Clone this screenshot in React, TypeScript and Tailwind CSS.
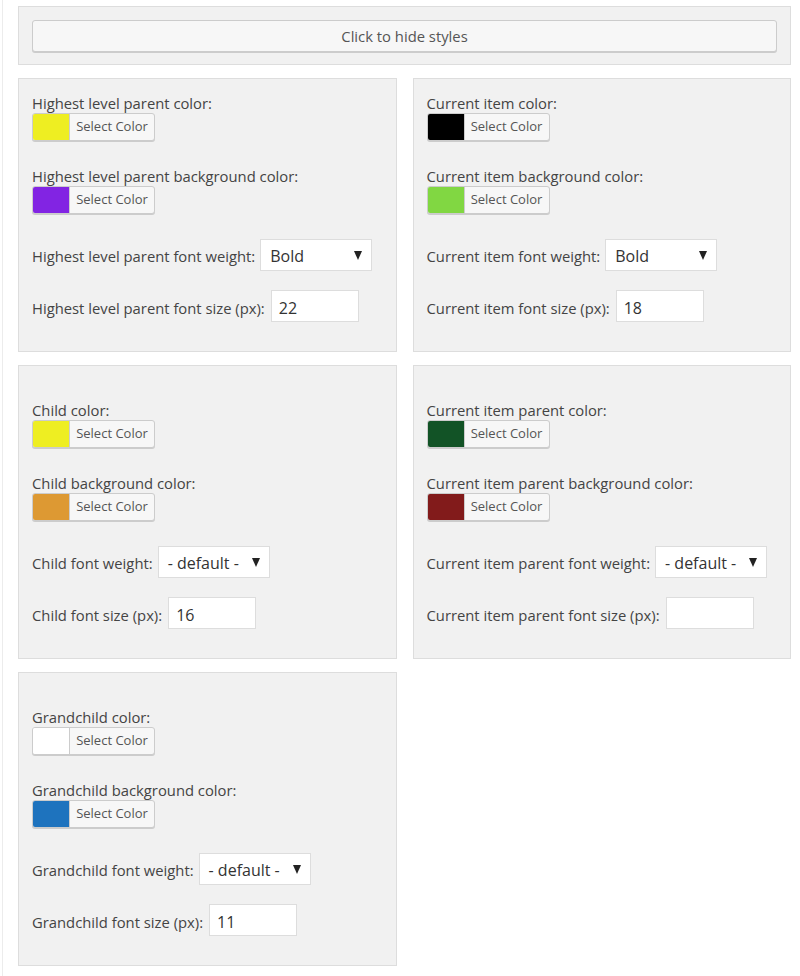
import React from 'react';

type Field = { label: string; color: string };
type Panel = {
  colors: Field[];
  weightLabel: string;
  weight: string;
  sizeLabel: string;
  size: string;
  spaced?: boolean;
};

const panels: Panel[] = [
  {
    colors: [
      { label: 'Highest level parent color:', color: '#eeee22' },
      { label: 'Highest level parent background color:', color: '#8224e3' },
    ],
    weightLabel: 'Highest level parent font weight:',
    weight: 'Bold',
    sizeLabel: 'Highest level parent font size (px):',
    size: '22',
  },
  {
    colors: [
      { label: 'Current item color:', color: '#000000' },
      { label: 'Current item background color:', color: '#81d742' },
    ],
    weightLabel: 'Current item font weight:',
    weight: 'Bold',
    sizeLabel: 'Current item font size (px):',
    size: '18',
  },
  {
    colors: [
      { label: 'Child color:', color: '#eeee22' },
      { label: 'Child background color:', color: '#dd9933' },
    ],
    weightLabel: 'Child font weight:',
    weight: '- default -',
    sizeLabel: 'Child font size (px):',
    size: '16',
    spaced: true,
  },
  {
    colors: [
      { label: 'Current item parent color:', color: '#125326' },
      { label: 'Current item parent background color:', color: '#821b1b' },
    ],
    weightLabel: 'Current item parent font weight:',
    weight: '- default -',
    sizeLabel: 'Current item parent font size (px):',
    size: '',
    spaced: true,
  },
  {
    colors: [
      { label: 'Grandchild color:', color: '#ffffff' },
      { label: 'Grandchild background color:', color: '#1e73be' },
    ],
    weightLabel: 'Grandchild font weight:',
    weight: '- default -',
    sizeLabel: 'Grandchild font size (px):',
    size: '11',
    spaced: true,
  },
];

function ColorPicker({ color }: { color: string }) {
  return (
    <div className="flex h-[28px] w-[123px] overflow-hidden rounded-[3px] border border-[#cccccc] bg-[#f7f7f7] shadow-[0_1px_0_#cccccc]">
      <span className="h-full w-[37px] border-r border-[#cccccc]" style={{ backgroundColor: color }} />
      <span className="flex flex-1 items-center justify-center text-[13px] text-[#555555]">Select Color</span>
    </div>
  );
}

function SettingsPanel({ panel }: { panel: Panel }) {
  return (
    <div className={`border border-[#dddddd] bg-[#f1f1f1] px-[13px] pb-[29px] ${panel.spaced ? 'pt-[35px]' : 'pt-[15px]'}`}>
      {panel.colors.map((f, i) => (
        <div key={f.label} className={i > 0 ? 'mt-[26px]' : ''}>
          <div className="text-[14.8px] leading-[19px]">{f.label}</div>
          <ColorPicker color={f.color} />
        </div>
      ))}
      <div className="mt-[25px] flex items-baseline">
        <span className="text-[14.8px] leading-[19px]">{panel.weightLabel}</span>
        <div className="ml-[5px] flex h-[32px] w-[112px] items-start justify-between border border-[#dddddd] bg-white pl-[9px] pr-[9px] pt-[5px] text-[16px] leading-[22px] text-[#333333]">
          <span>{panel.weight}</span>
          <svg className="mt-[6px]" width="8" height="9" viewBox="0 0 8 9">
            <polygon points="0,0 8,0 4,9" fill="#222222" />
          </svg>
        </div>
      </div>
      <div className="mt-[19px] flex items-baseline">
        <span className="text-[14.8px] leading-[19px]">{panel.sizeLabel}</span>
        <div className="ml-[6px] h-[32px] w-[88px] border border-[#dddddd] bg-white pl-[7px] pt-[6px] text-[16px] leading-[22px] text-[#333333]">
          {panel.size || '\u00a0'}
        </div>
      </div>
    </div>
  );
}

export default function App() {
  return (
    <div className="min-h-screen bg-white pl-[2px] font-['Open_Sans',sans-serif] text-[#444444]">
      <div className="min-h-screen border-l border-[#ececec] pb-[8px] pl-[15px] pr-[9px] pt-[6px]">
        <div className="border border-[#dddddd] bg-[#f1f1f1] px-[13px] pb-[12px] pt-[13px]">
          <button className="flex h-[32px] w-full items-center justify-center rounded-[3px] border border-[#cccccc] bg-[#f7f7f7] text-[14.8px] text-[#555555] shadow-[0_1px_0_#cccccc]">
            Click to hide styles
          </button>
        </div>
        <div className="mt-[13px] grid grid-cols-2 items-start gap-x-4 gap-y-[13px]">
          {panels.map((p) => (
            <SettingsPanel key={p.weightLabel} panel={p} />
          ))}
        </div>
      </div>
    </div>
  );
}
